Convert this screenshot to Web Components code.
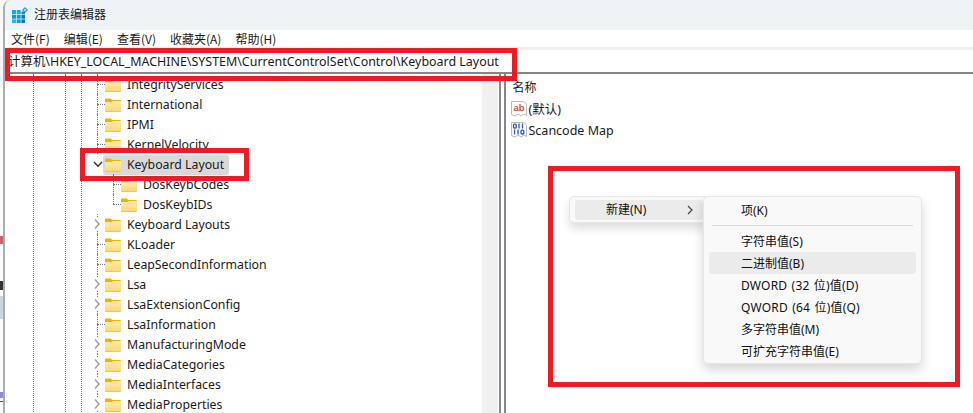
<!DOCTYPE html>
<html><head><meta charset="utf-8"><style>
html,body{margin:0;padding:0;height:100%;overflow:hidden;background:#fff}
body{width:973px;height:413px;position:relative;font-family:"Noto Sans CJK SC","Noto Sans",sans-serif}
</style></head><body>
<backdrop-strip></backdrop-strip>
<reg-window>
<title-bar slot="title">注册表编辑器</title-bar>
<menu-bar slot="menu"><span>文件(F)</span><span>编辑(E)</span><span>查看(V)</span><span>收藏夹(A)</span><span>帮助(H)</span></menu-bar>
<address-bar slot="address">计算机\HKEY_LOCAL_MACHINE\SYSTEM\CurrentControlSet\Control\Keyboard Layout</address-bar>
<tree-pane slot="tree">
<tree-row level="1" line="t">IntegrityServices</tree-row>
<tree-row level="1" line="t">International</tree-row>
<tree-row level="1" line="t">IPMI</tree-row>
<tree-row level="1" line="t">KernelVelocity</tree-row>
<tree-row level="1" arrow="open" selected>Keyboard Layout</tree-row>
<tree-row level="2" line="t">DosKeybCodes</tree-row>
<tree-row level="2" line="l">DosKeybIDs</tree-row>
<tree-row level="1" arrow="closed">Keyboard Layouts</tree-row>
<tree-row level="1" line="t">KLoader</tree-row>
<tree-row level="1" line="t">LeapSecondInformation</tree-row>
<tree-row level="1" arrow="closed">Lsa</tree-row>
<tree-row level="1" arrow="closed">LsaExtensionConfig</tree-row>
<tree-row level="1" line="t">LsaInformation</tree-row>
<tree-row level="1" arrow="closed">ManufacturingMode</tree-row>
<tree-row level="1" arrow="closed">MediaCategories</tree-row>
<tree-row level="1" arrow="closed">MediaInterfaces</tree-row>
<tree-row level="1" arrow="closed">MediaProperties</tree-row>
</tree-pane>
<value-pane slot="values">
<value-row kind="ab">(默认)</value-row>
<value-row kind="bin" style="height:22px">Scancode Map</value-row>
</value-pane>
</reg-window>
<context-menus></context-menus>
<red-box style="left:5px;top:48px;width:512px;height:33px"></red-box>
<red-box style="left:80px;top:148px;width:169px;height:33px"></red-box>
<red-box style="left:548px;top:166px;width:412px;height:221px"></red-box>
<script>
function def(name,html,init){customElements.define(name,class extends HTMLElement{constructor(){super();this.attachShadow({mode:'open'}).innerHTML=html;}connectedCallback(){init&&init.call(this,this.shadowRoot)}})}
const folder=`<svg width="16" height="14" viewBox="0 0 16 14"><defs><linearGradient id="f" x1="0" y1="0" x2="0" y2="1"><stop offset="0" stop-color="#ffeeb0"/><stop offset="1" stop-color="#fbd66e"/></linearGradient></defs><path d="M0 1.5Q0 .5 1 .5H5.5L7.5 2H15Q16 2 16 3V5H0Z" fill="#f2ae0c"/><path d="M0 4H6.5L8 3H16V13Q16 14 15 14H1Q0 14 0 13Z" fill="url(#f)"/><path d="M.3 13.7H15.7" stroke="#e9b53f" stroke-width=".7"/></svg>`;
def('backdrop-strip',`<style>:host{display:block;position:absolute;left:0;top:0;width:3px;height:413px;background:#fff}
i{position:absolute;left:0;width:3px}</style>
<i style="top:0;height:413px;background:#fbfbfb"></i><i style="top:236px;height:8px;background:#c9646a"></i><i style="top:281px;height:9px;background:#333"></i><i style="top:296px;height:23px;background:#ccd4df"></i><i style="top:392px;height:6px;background:#8a8ae0"></i><i style="top:401px;height:1px;background:#3a3ad0"></i>`);
def('reg-window',`<style>
:host{display:flex;flex-direction:column;position:absolute;left:3px;top:0;width:970px;height:413px;background:#f0f0f0;border-left:2px solid #a9acb2;border-top-left-radius:8px;box-sizing:border-box;color:#1a1a1a;overflow:hidden}
.body{flex:1;display:flex;min-height:0;background:#fff;border-top:2px solid #858585;box-sizing:border-box}
.l{width:477px;flex:none;position:relative;overflow:hidden}
.sb{width:16px;flex:none;background:#f0f0f0}
.sp{width:1.5px;flex:none;background:#85878c;margin-left:1px}
.sg{width:3.5px;flex:none}
.r{flex:1;position:relative;margin-left:0}
</style><slot name="title"></slot><slot name="menu"></slot><slot name="address"></slot>
<div class="body"><div class="l"><slot name="tree"></slot></div><div class="sb"></div><div class="sp"></div><div class="sg"></div><div class="sp" style="margin-left:0"></div><div class="r"><slot name="values"></slot></div></div>`);
def('title-bar',`<style>:host{display:flex;align-items:center;height:30px;padding:0 0 3px 7px;gap:6px;font:12px "Noto Sans CJK SC",sans-serif;color:#1a1a1a;box-sizing:border-box;background:#eff3f8}
svg{flex:none;margin-top:3px}</style>
<svg width="16" height="16" viewBox="0 0 16 16"><g fill="#0d9be0"><rect x="0" y="3" width="4" height="4" fill="#1aa8e8"/><rect x="4.7" y="3" width="4" height="4" fill="#1aa8e8"/><rect x="9.4" y="4.5" width="3.6" height="2.5" fill="#0c8cd4"/><rect x="0" y="7.7" width="4" height="4"/><rect x="4.7" y="7.7" width="4" height="4"/><rect x="9.4" y="7.7" width="3.6" height="4" fill="#0a78c0"/><rect x="0" y="12.4" width="4" height="3.6" fill="#22b6f0"/><rect x="4.7" y="12.4" width="4" height="3.6"/><rect x="9.4" y="12.4" width="3.6" height="3.6" fill="#0a78c0"/></g><path d="M13 0L16 3 13 6 10 3Z" fill="#2a9fdc"/><path d="M13 1.7L14.3 3 13 4.3 11.7 3Z" fill="#c5e9fb"/></svg><span><slot></slot></span>`);
def('menu-bar',`<style>:host{display:flex;align-items:center;height:17px;padding-left:6px;gap:14px;font:12px "Noto Sans CJK SC",sans-serif;background:#fff;box-sizing:border-box;color:#1a1a1a}</style><slot></slot>`);
def('address-bar',`<style>:host{display:flex;align-items:center;height:22px;background:#fff;margin-top:3px;padding-left:3px;box-sizing:border-box;overflow:hidden;white-space:nowrap;font:12.44px "Noto Sans","Noto Sans CJK SC",sans-serif;color:#1a1a1a}</style><span><slot></slot></span>`);
def('tree-pane',`<style>:host{display:block;position:relative}
.g{position:absolute;top:0;bottom:0;width:0;border-left:1px dotted #777}</style>
<div class="g" style="left:28px"></div><div class="g" style="left:60px"></div><div class="g" style="left:76px"></div>
<slot></slot>`);
def('tree-row',`<style>:host{display:flex;align-items:center;height:20px;position:relative;font:12.3px "Noto Sans","Noto Sans CJK SC",sans-serif;color:#1a1a1a;white-space:nowrap}
.c{position:absolute;top:1px;height:20px;border-radius:3px}
.a{position:absolute;top:4px;width:12px;height:12px}
.t{position:relative;margin-left:6px}
.h{position:absolute;border-top:1px dotted #777;top:10px}
.v{position:absolute;border-left:1px dotted #777}
</style><span id="bg"></span><span id="d"></span><span id="fi"></span><span class="t"><slot></slot></span>`,function(s){
const lv=+this.getAttribute('level'),x=lv==1?105:121,o=5;
this.style.paddingLeft=(x-o)+'px';
const fi=s.getElementById('fi');fi.innerHTML=folder;fi.style.cssText='display:flex;position:relative;top:1px';
let h='';
const vx=x-8-o;
const a=this.getAttribute('arrow');
if(!a)h+=`<div class="h" style="left:${vx}px;width:8px"></div>`;
if(lv==1&&!a)h+=`<div class="v" style="left:${vx}px;top:0;height:20px"></div>`;
if(lv==1&&a=='closed')h+=`<div class="v" style="left:${vx}px;top:0;height:3px"></div><div class="v" style="left:${vx}px;top:17px;height:3px"></div>`;
if(lv==2)h+=`<div class="v" style="left:${vx}px;top:0;height:${this.getAttribute('line')=='t'?20:10}px"></div>`;
if(a=='open')h+=`<svg class="a" viewBox="0 0 12 12" style="left:${vx-5.5}px"><path d="M2 4L6 8.2L10 4" fill="none" stroke="#333" stroke-width="1.4"/></svg>`;
if(a=='closed')h+=`<svg class="a" viewBox="0 0 12 12" style="left:${vx-6.5}px"><path d="M4 1.5L8 6L4 10.5" fill="none" stroke="#a0a0a0" stroke-width="1.5"/></svg>`;
s.getElementById('d').innerHTML=h;
if(this.hasAttribute('selected'))s.getElementById('bg').innerHTML=`<div class="c" style="left:${x-o-2}px;width:126px;background:#d9d9d9"></div>`;
});
def('value-pane',`<style>:host{display:block;font:12.5px "Noto Sans","Noto Sans CJK SC",sans-serif;color:#1a1a1a}
.h{height:24px;padding:2px 0 0 7px;display:flex;align-items:center;font-size:12px;box-sizing:border-box}</style><div class="h">名称</div><slot></slot>`);
def('value-row',`<style>:host{display:flex;align-items:center;height:21px;padding-left:5px;gap:2px;white-space:nowrap}</style><span id="i" style="display:flex"></span><span><slot></slot></span>`,function(s){
const k=this.getAttribute('kind');
const page='<path d="M.5 .5H12.5L15.5 3V14.5L13 13 10 15 7 13 4 15 .5 13.5Z" fill="#fff" stroke="#b9b9b9"/>';
s.getElementById('i').innerHTML=k=='ab'?`<svg width="16" height="16" viewBox="0 0 16 16">${page}<text x="8" y="10" text-anchor="middle" font-family="Liberation Sans" font-weight="700" font-size="9.5" fill="#d9512c">ab</text></svg>`:`<svg width="16" height="16" viewBox="0 0 16 16">${page}<g fill="none" stroke="#2b57c6" stroke-width="1.3"><rect x="2.5" y="2.2" width="2.8" height="3.8" rx="1"/><path d="M8 1.6V6.6M11.5 1.6V6.6M3.5 7.6V12.6M7 7.6V12.6"/><rect x="10" y="8.2" width="2.8" height="3.8" rx="1"/></g></svg>`;
});
def('menu-item',`<style>:host{display:flex;align-items:center;height:22px;padding-left:32px;margin:0 5px;border-radius:3px;font:12px "Noto Sans","Noto Sans CJK SC",sans-serif;color:#111;white-space:nowrap}
:host([hot]){background:#ebebeb}
:host([wide]){letter-spacing:.2px;word-spacing:1px}</style><slot></slot>`);
def('context-menus',`<style>:host{display:block;position:absolute;left:0;top:0}
.a,.b{position:absolute;background:#f9f9f9;border:1px solid #e6e6e6;border-radius:5px;box-sizing:border-box}
.a{left:569px;top:196px;width:140px;height:27px;box-shadow:0 6px 10px rgba(0,0,0,.13)}
.b{left:703px;top:196px;width:219px;height:168px;box-shadow:0 6px 12px rgba(0,0,0,.16);padding-top:2px}
.n{position:absolute;left:5px;top:3px;right:5px;height:20px;background:#ebebeb;border-radius:3px;font:12px/20px "Noto Sans","Noto Sans CJK SC",sans-serif;padding-left:31px;color:#111}
.n svg{position:absolute;left:110px;top:5px}
.s{height:1px;background:#d9d9d9;margin:4px 8px 4px}
</style>
<div class="a"><div class="n">新建(N)<svg width="10" height="10" viewBox="0 0 10 10"><path d="M3 1L7 5L3 9" fill="none" stroke="#444" stroke-width="1.2"/></svg></div></div>
<div class="b"><menu-item>项(K)</menu-item><div class="s"></div><menu-item>字符串值(S)</menu-item><menu-item hot>二进制值(B)</menu-item><menu-item wide>DWORD (32 位)值(D)</menu-item><menu-item wide>QWORD (64 位)值(Q)</menu-item><menu-item>多字符串值(M)</menu-item><menu-item>可扩充字符串值(E)</menu-item></div>`);
def('red-box',`<style>:host{display:block;position:absolute;box-sizing:border-box;border:5px solid #ed1c24}</style>`);
</script>
</body></html>
